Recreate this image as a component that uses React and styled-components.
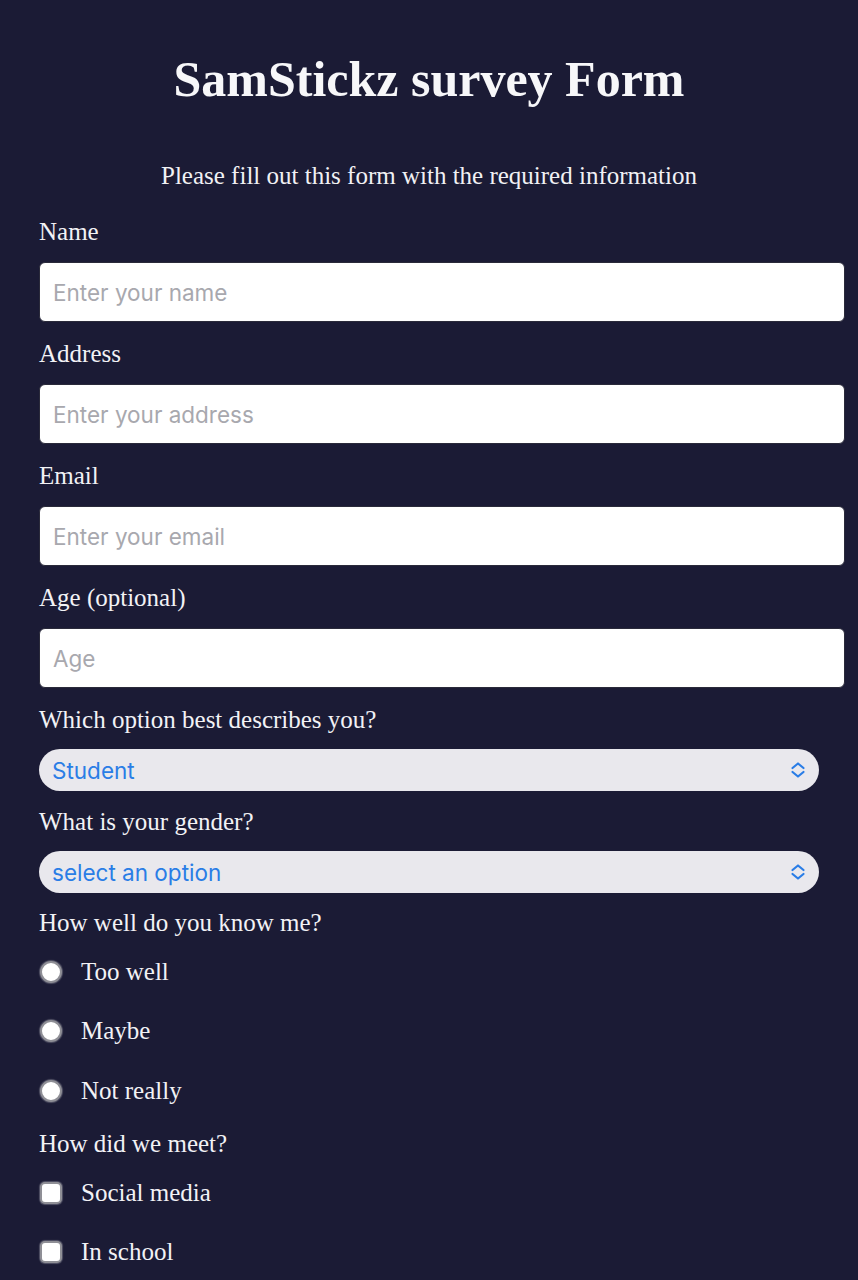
import React from "react";
import styled, { createGlobalStyle } from "styled-components";

const Global = createGlobalStyle`
  html, body { margin: 0; padding: 0; background: #1b1b35; }
  body { font-family: "Liberation Serif", "Times New Roman", serif; color: #f4f4f6; }
  * { box-sizing: border-box; }
`;

const Page = styled.main`
  width: 858px;
  min-height: 1280px;
  background: #1b1b35;
  padding: 51px 0 40px 39px;
`;

const Title = styled.h1`
  margin: 0 0 0 -39px;
  font-size: 50px;
  line-height: 56px;
  font-weight: 700;
  text-align: center;
  color: #f7f7f9;
`;

const Subtitle = styled.p`
  margin: 54px 0 0 -39px;
  font-size: 25px;
  line-height: 30px;
  text-align: center;
  color: #f1f1f4;
`;

const Form = styled.form`
  display: flex;
  flex-direction: column;
`;

const Label = styled.label`
  display: block;
  font-size: 25px;
  line-height: 30px;
  padding-top: 2px;
  margin-top: ${(p) => p.$top ?? 15}px;
  margin-bottom: ${(p) => (p.$bottom ?? 17) - 2}px;
  color: #f2f2f5;
`;

const TextInput = styled.input`
  width: 806px;
  height: 60px;
  border: 1px solid #2a2a3a;
  border-radius: 6px;
  background: #ffffff;
  padding: 0 13px;
  font-family: Inter, "Noto Sans", sans-serif;
  font-size: 22.5px;
  color: #222;
  outline: none;
  &::placeholder { color: #a8a8ae; }
`;

const SelectWrap = styled.div`
  position: relative;
  width: 780px;
  height: 42px;
`;

const Select = styled.select`
  appearance: none;
  -webkit-appearance: none;
  width: 100%;
  height: 100%;
  border: none;
  border-radius: 21px;
  background: #e9e8ed;
  padding: 0 13px;
  font-family: Inter, "Noto Sans", sans-serif;
  font-size: 22.5px;
  color: #2a7de6;
  outline: none;
`;

const Chevron = styled.svg`
  position: absolute;
  right: 12px;
  top: 12px;
  pointer-events: none;
`;

const OptionRow = styled.label`
  display: flex;
  align-items: center;
  height: 30px;
  margin-top: ${(p) => p.$top}px;
  font-size: 25px;
  color: #f2f2f5;
`;

const Radio = styled.input`
  appearance: none;
  -webkit-appearance: none;
  margin: 0 19px 0 1px;
  width: 22px;
  height: 22px;
  border-radius: 50%;
  background: #ffffff;
  border: 2px solid #8f8f96;
  box-shadow: 0 0 1px 1px rgba(255,255,255,0.25);
`;

const Check = styled(Radio)`
  border-radius: 5px;
`;

const Arrows = () => (
  <Chevron width="18" height="18" viewBox="0 0 18 18" fill="none" stroke="#2a7de6" strokeWidth="2.2" strokeLinecap="round" strokeLinejoin="round">
    <path d="M3.5 7 L9 2.5 L14.5 7" />
    <path d="M3.5 11 L9 15.5 L14.5 11" />
  </Chevron>
);

export default function App() {
  return (
    <>
      <Global />
      <Page>
        <Title>SamStickz survey Form</Title>
        <Subtitle>Please fill out this form with the required information</Subtitle>
        <Form onSubmit={(e) => e.preventDefault()}>
          <Label htmlFor="name" $top={24}>Name</Label>
          <TextInput id="name" placeholder="Enter your name" />
          <Label htmlFor="address">Address</Label>
          <TextInput id="address" placeholder="Enter your address" />
          <Label htmlFor="email">Email</Label>
          <TextInput id="email" placeholder="Enter your email" />
          <Label htmlFor="age">Age (optional)</Label>
          <TextInput id="age" placeholder="Age" />
          <Label htmlFor="role" $bottom={16}>Which option best describes you?</Label>
          <SelectWrap>
            <Select id="role" defaultValue="student">
              <option value="student">Student</option>
              <option value="worker">Worker</option>
              <option value="other">Other</option>
            </Select>
            <Arrows />
          </SelectWrap>
          <Label htmlFor="gender" $top={14} $bottom={16}>What is your gender?</Label>
          <SelectWrap>
            <Select id="gender" defaultValue="">
              <option value="">select an option</option>
              <option value="male">Male</option>
              <option value="female">Female</option>
            </Select>
            <Arrows />
          </SelectWrap>
          <Label $top={13} $bottom={2}>How well do you know me?</Label>
          <OptionRow $top={19}><Radio type="radio" name="know" />Too well</OptionRow>
          <OptionRow $top={29}><Radio type="radio" name="know" />Maybe</OptionRow>
          <OptionRow $top={30}><Radio type="radio" name="know" />Not really</OptionRow>
          <Label $top={21} $bottom={2}>How did we meet?</Label>
          <OptionRow $top={19}><Check type="checkbox" />Social media</OptionRow>
          <OptionRow $top={29}><Check type="checkbox" />In school</OptionRow>
        </Form>
      </Page>
    </>
  );
}
